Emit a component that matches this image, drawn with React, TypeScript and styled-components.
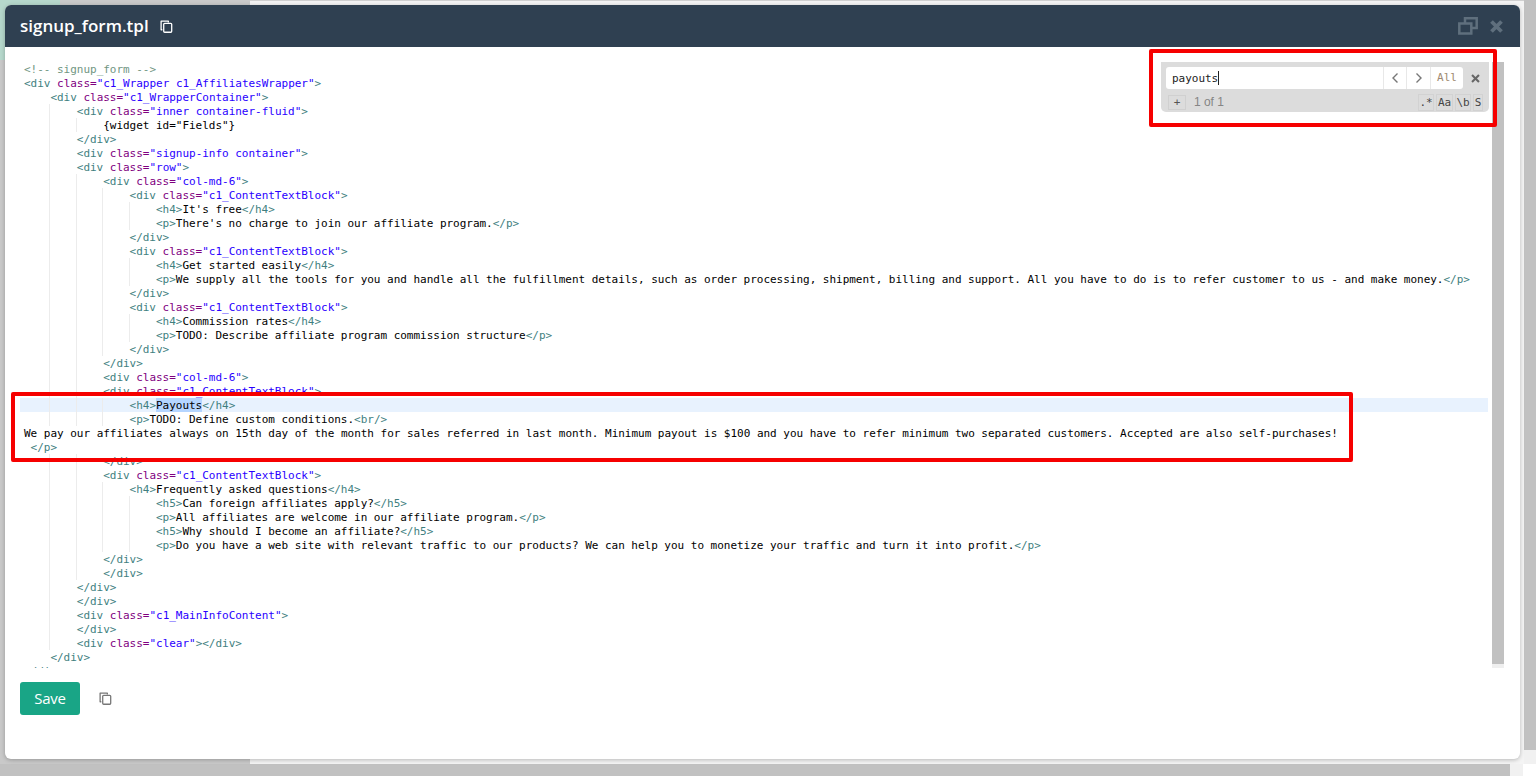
import React from "react";
import styled, { createGlobalStyle } from "styled-components";

const Global = createGlobalStyle`
  html, body { margin: 0; padding: 0; height: 100%; overflow: hidden; background: #fff; }
  #root { height: 100%; }
`;

const Page = styled.div`
  position: relative;
  width: 1536px;
  height: 776px;
  overflow: hidden;
  display: flex;
  flex-direction: column;
`;
const Backdrop = styled.div`
  flex: 1;
  display: flex;
  min-height: 0;
`;
const Sidebar = styled.div`
  width: 250px;
  background: #c9c9c9;
`;
const Logo = styled.div`
  width: 60px;
  height: 60px;
  background: #b6d8cc;
`;
const MainArea = styled.div`
  flex: 1;
  background: #f4f4f4;
  border-top: 1px solid #d0d0d0;
`;
const VScroll = styled.div`
  width: 12px;
  display: flex;
  flex-direction: column;
`;
const ScrollThumb = styled.div`
  flex: 1;
  background: #c1c1c1;
`;
const ScrollCap = styled.div`
  height: 14px;
  background: #f1f1f1;
`;
const HScroll = styled.div`
  height: 12px;
  display: flex;
`;
const HThumb = styled.div`
  width: 1510px;
  background: #c1c1c1;
`;
const HCap = styled.div`
  width: 13px;
  background: #f1f1f1;
`;

const Modal = styled.div`
  position: absolute;
  left: 5px;
  top: 5px;
  width: 1515px;
  height: 754px;
  background: #fff;
  border-radius: 6px;
  box-shadow: 0 1px 4px rgba(0, 0, 0, 0.25);
  display: flex;
  flex-direction: column;
  overflow: hidden;
`;
const Header = styled.header`
  height: 42px;
  flex: none;
  background: #2f4051;
  display: flex;
  align-items: center;
  padding: 0 17px 0 15px;
  color: #fff;
`;
const Title = styled.h1`
  margin: 0;
  font: 600 17px/24px "Open Sans", sans-serif;
  color: #fff;
`;
const TitleCopy = styled.span`
  display: flex;
  margin-left: 11px;
  color: #fff;
`;
const HeaderActions = styled.div`
  margin-left: auto;
  display: flex;
  align-items: center;
  gap: 12px;
  color: #5f6f7d;
`;
const Body = styled.div`
  flex: 1;
  display: flex;
  flex-direction: column;
  padding: 15px 16px 0 15px;
`;
const Editor = styled.div`
  position: relative;
  height: 606px;
  flex: none;
  overflow: hidden;
  background: #fff;
  font: 11px/16px "DejaVu Sans Mono", monospace;
  letter-spacing: -0.02px;
  color: #000;
`;
const EditorLine = styled.div<{ $active?: boolean }>`
  height: 14px;
  padding-left: 4px;
  white-space: pre;
  display: flex;
  margin-right: 16px;
  background: ${(p) => (p.$active ? "#e8f2fe" : "transparent")};
`;
const Indent = styled.span<{ $guide?: boolean }>`
  display: inline-block;
  width: 26.4px;
  height: 14px;
  flex: none;
  box-sizing: border-box;
  border-right: 1px solid ${(p) => (p.$guide ? "#ececec" : "transparent")};
`;
const Tag = styled.span`
  color: #3f7f7f;
`;
const Attr = styled.span`
  color: #7f007f;
`;
const Str = styled.span`
  color: #2a00ff;
`;
const Comment = styled.span`
  color: #719682;
`;
const Selected = styled.span`
  display: inline-block;
  height: 14px;
  background: #b5d5ff;
`;
const EditorScroll = styled.div`
  position: absolute;
  right: 0;
  top: 0;
  width: 12px;
  height: 602px;
  background: #c1c1c1;
  border-bottom: 5px solid #efefef;
`;
const Search = styled.div`
  position: absolute;
  left: 1141px;
  top: 0;
  width: 328px;
  height: 50px;
  box-sizing: border-box;
  padding: 5px 0 0 5px;
  background: #dcdcdc;
  border-radius: 0 0 5px 5px;
  display: flex;
  flex-direction: column;
  gap: 3px;
`;
const SearchRow = styled.div`
  display: flex;
  align-items: center;
  height: 22px;
`;
const SearchGroup = styled.div`
  width: 297px;
  height: 22px;
  flex: none;
  display: flex;
  background: #fff;
  border-radius: 3px;
  overflow: hidden;
`;
const SearchInput = styled.div`
  flex: 1;
  padding-left: 6px;
  font: 11px/23px "DejaVu Sans Mono", monospace;
  color: #222;
  display: flex;
  align-items: center;
`;
const Caret = styled.span`
  width: 1px;
  height: 14px;
  background: #222;
`;
const SearchBtn = styled.div<{ $w: number }>`
  width: ${(p) => p.$w}px;
  flex: none;
  box-sizing: border-box;
  display: flex;
  align-items: center;
  justify-content: center;
  border-left: 1px solid #e8e8e8;
  color: #777;
  font: 11px/22px "DejaVu Sans Mono", monospace;
`;
const AllBtn = styled(SearchBtn)`
  color: #a08a70;
`;
const CloseBtn = styled.div`
  display: flex;
  width: 24px;
  flex: none;
  justify-content: center;
  color: #666;
`;
const AddBtn = styled.div`
  width: 18px;
  height: 15px;
  margin-left: 2px;
  display: flex;
  align-items: center;
  justify-content: center;
  border: 1px solid #d0d0d0;
  box-sizing: border-box;
  color: #555;
  font: 11px/13px "DejaVu Sans Mono", monospace;
`;
const Count = styled.div`
  margin-left: 8px;
  font: 12px/16px "Liberation Sans", sans-serif;
  color: #858585;
`;
const Options = styled.div`
  margin-left: auto;
  margin-right: 6px;
  display: flex;
  gap: 2px;
`;
const Option = styled.div<{ $w: number }>`
  width: ${(p) => p.$w}px;
  height: 17px;
  box-sizing: border-box;
  border: 1px solid #d2d2d2;
  display: flex;
  align-items: center;
  justify-content: center;
  color: #444;
  font: 11px/15px "DejaVu Sans Mono", monospace;
`;
const Footer = styled.div`
  display: flex;
  align-items: center;
  margin-top: 14px;
`;
const SaveButton = styled.button`
  width: 60px;
  height: 33px;
  border: 0;
  padding: 0;
  border-radius: 3px;
  background: #19a586;
  color: #fff;
  font: 400 15px/33px "Open Sans", sans-serif;
  letter-spacing: -0.2px;
`;
const FooterCopy = styled.span`
  display: flex;
  margin-left: 19px;
  color: #777;
`;
const Highlight = styled.div`
  position: absolute;
  box-sizing: border-box;
  border: 4px solid #f60000;
  border-radius: 2px;
  pointer-events: none;
`;
const SearchMark = styled(Highlight)`
  left: 1149px;
  top: 49px;
  width: 348px;
  height: 78px;
`;
const CodeMark = styled(Highlight)`
  left: 11px;
  top: 392px;
  width: 1342px;
  height: 70px;
`;

const CopyIcon = ({ size = 13 }: { size?: number }) => (
  <svg width={size} height={size} viewBox="0 0 14 14" fill="none" stroke="currentColor" strokeWidth="1.4">
    <path d="M2.5 10.5H1.2V1.2H9V2.6" strokeLinejoin="round" />
    <rect x="4" y="3.6" width="8.6" height="9.6" rx="1" />
  </svg>
);
const RestoreIcon = () => (
  <svg width="20" height="18" viewBox="0 0 20 18" fill="none" stroke="currentColor" strokeWidth="2.5">
    <path d="M7 6V1.3H18.7V11H13" />
    <rect x="1.3" y="6.5" width="12" height="10" />
  </svg>
);
const TimesIcon = ({ size = 13, w = 3.8 }: { size?: number; w?: number }) => (
  <svg width={size} height={size} viewBox="0 0 13 13" fill="none" stroke="currentColor" strokeWidth={w}>
    <path d="M1.5 1.5L11.5 11.5M11.5 1.5L1.5 11.5" />
  </svg>
);
const Chevron = ({ d }: { d: string }) => (
  <svg width="8" height="12" viewBox="0 0 8 12" fill="none" stroke="currentColor" strokeWidth="1.4">
    <path d={d} />
  </svg>
);

const code: string[] = [
  `<!-- signup_form -->`,
  `<div class="c1_Wrapper c1_AffiliatesWrapper">`,
  `    <div class="c1_WrapperContainer">`,
  `        <div class="inner container-fluid">`,
  `            {widget id="Fields"}`,
  `        </div>`,
  `        <div class="signup-info container">`,
  `        <div class="row">`,
  `            <div class="col-md-6">`,
  `                <div class="c1_ContentTextBlock">`,
  `                    <h4>It's free</h4>`,
  `                    <p>There's no charge to join our affiliate program.</p>`,
  `                </div>`,
  `                <div class="c1_ContentTextBlock">`,
  `                    <h4>Get started easily</h4>`,
  `                    <p>We supply all the tools for you and handle all the fulfillment details, such as order processing, shipment, billing and support. All you have to do is to refer customer to us - and make money.</p>`,
  `                </div>`,
  `                <div class="c1_ContentTextBlock">`,
  `                    <h4>Commission rates</h4>`,
  `                    <p>TODO: Describe affiliate program commission structure</p>`,
  `                </div>`,
  `            </div>`,
  `            <div class="col-md-6">`,
  `            <div class="c1_ContentTextBlock">`,
  `                <h4>Payouts</h4>`,
  `                <p>TODO: Define custom conditions.<br/>`,
  `We pay our affiliates always on 15th day of the month for sales referred in last month. Minimum payout is $100 and you have to refer minimum two separated customers. Accepted are also self-purchases!`,
  ` </p>`,
  `            </div>`,
  `            <div class="c1_ContentTextBlock">`,
  `                <h4>Frequently asked questions</h4>`,
  `                    <h5>Can foreign affiliates apply?</h5>`,
  `                    <p>All affiliates are welcome in our affiliate program.</p>`,
  `                    <h5>Why should I become an affiliate?</h5>`,
  `                    <p>Do you have a web site with relevant traffic to our products? We can help you to monetize your traffic and turn it into profit.</p>`,
  `            </div>`,
  `            </div>`,
  `        </div>`,
  `        </div>`,
  `        <div class="c1_MainInfoContent">`,
  `        </div>`,
  `        <div class="clear"></div>`,
  `    </div>`,
  `</div>`,
];

function renderTag(src: string, key: number) {
  const parts = src.match(/^(<\/?[\w]+)(.*?)(\/?>)$/);
  if (!parts) return <Tag key={key}>{src}</Tag>;
  const attrs = parts[2].match(/^(\s+)(\w+)(=)(".*")$/);
  return (
    <React.Fragment key={key}>
      <Tag>{parts[1]}</Tag>
      {attrs && (
        <>
          {attrs[1]}
          <Attr>
            {attrs[2]}
            {attrs[3]}
          </Attr>
          <Str>{attrs[4]}</Str>
        </>
      )}
      <Tag>{parts[3]}</Tag>
    </React.Fragment>
  );
}

function renderText(text: string, key: number) {
  if (text === "Payouts") return <Selected key={key}>{text}</Selected>;
  return <React.Fragment key={key}>{text}</React.Fragment>;
}

function renderCode(src: string) {
  if (src.startsWith("<!--")) return <Comment>{src}</Comment>;
  return src
    .split(/(<[^>]+>)/)
    .filter(Boolean)
    .map((piece, i) => (piece.startsWith("<") ? renderTag(piece, i) : renderText(piece, i)));
}

function CodeLine({ src, active }: { src: string; active: boolean }) {
  const spaces = src.length - src.trimStart().length;
  const tabs = Math.floor(spaces / 4);
  const rest = src.slice(tabs * 4);
  const lead = rest.length - rest.trimStart().length;
  return (
    <EditorLine $active={active}>
      {Array.from({ length: tabs }, (_, i) => (
        <Indent key={i} $guide={i < tabs - 1} />
      ))}
      <span>
        {" ".repeat(lead)}
        {renderCode(rest.trimStart())}
      </span>
    </EditorLine>
  );
}

export default function App() {
  return (
    <Page>
      <Global />
      <Backdrop>
        <Sidebar>
          <Logo />
        </Sidebar>
        <MainArea />
        <VScroll>
          <ScrollThumb />
          <ScrollCap />
        </VScroll>
      </Backdrop>
      <HScroll>
        <HThumb />
        <HCap />
      </HScroll>
      <Modal>
        <Header>
          <Title>signup_form.tpl</Title>
          <TitleCopy>
            <CopyIcon />
          </TitleCopy>
          <HeaderActions>
            <RestoreIcon />
            <TimesIcon />
          </HeaderActions>
        </Header>
        <Body>
          <Editor>
            {code.map((src, i) => (
              <CodeLine key={i} src={src} active={i === 24} />
            ))}
            <EditorScroll />
            <Search>
              <SearchRow>
                <SearchGroup>
                  <SearchInput>
                    payouts
                    <Caret />
                  </SearchInput>
                  <SearchBtn $w={23}>
                    <Chevron d="M6.5 1.5L2 6L6.5 10.5" />
                  </SearchBtn>
                  <SearchBtn $w={24}>
                    <Chevron d="M1.5 1.5L6 6L1.5 10.5" />
                  </SearchBtn>
                  <AllBtn $w={33}>All</AllBtn>
                </SearchGroup>
                <CloseBtn>
                  <TimesIcon size={9} w={3} />
                </CloseBtn>
              </SearchRow>
              <SearchRow>
                <AddBtn>+</AddBtn>
                <Count>1 of 1</Count>
                <Options>
                  <Option $w={16}>.*</Option>
                  <Option $w={17}>Aa</Option>
                  <Option $w={16}>\b</Option>
                  <Option $w={10}>S</Option>
                </Options>
              </SearchRow>
            </Search>
          </Editor>
          <Footer>
            <SaveButton>Save</SaveButton>
            <FooterCopy>
              <CopyIcon size={13} />
            </FooterCopy>
          </Footer>
        </Body>
      </Modal>
      <SearchMark />
      <CodeMark />
    </Page>
  );
}
